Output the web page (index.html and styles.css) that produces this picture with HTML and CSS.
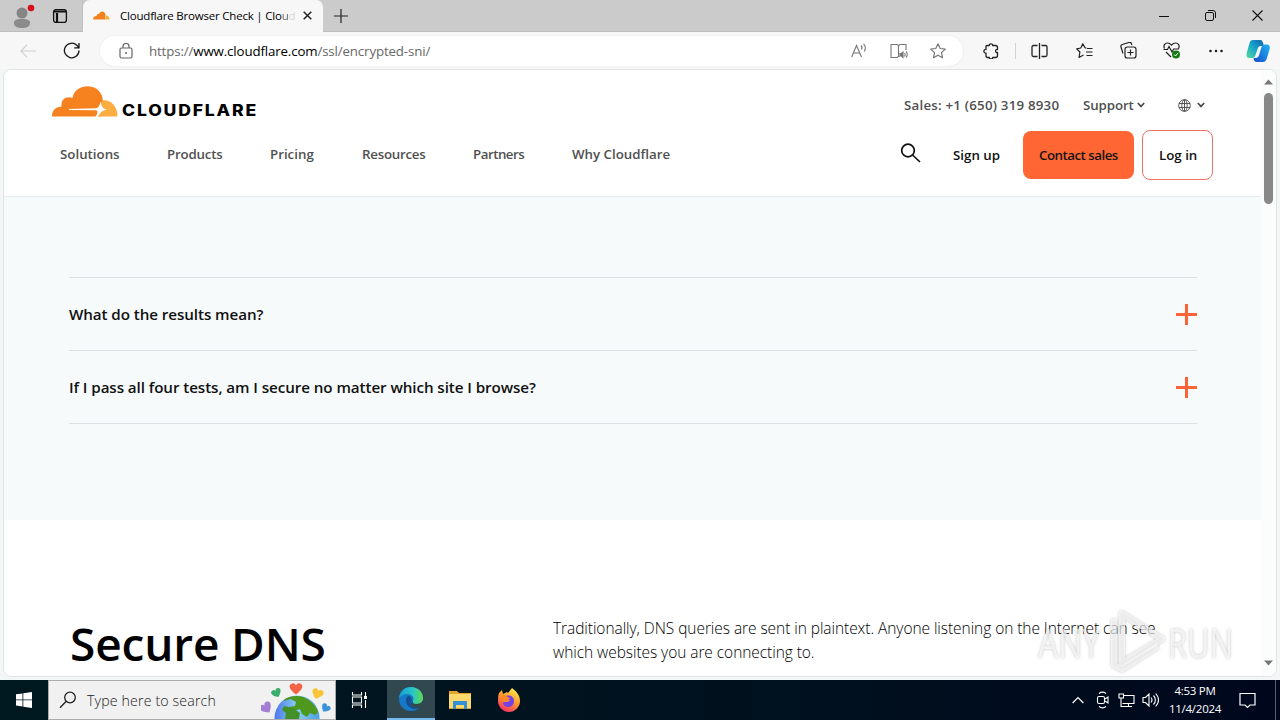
FILE: index.html
```html
<!DOCTYPE html>
<html lang="en">
<head>
<meta charset="utf-8">
<title>Cloudflare Browser Check</title>
<link rel="stylesheet" href="styles.css">
</head>
<body>
<div class="tabs">
  <div class="tabs-left">
    <svg class="profile" width="24" height="26" viewBox="0 0 24 26"><circle cx="11" cy="10" r="5.5" fill="#858585"/><path d="M3 20c0-3 2-4 8-4s8 1 8 4c0 4-4 5-8 5s-8-1-8-5z" fill="#8b8b8b"/><circle cx="20" cy="5" r="3.3" fill="#d51018"/></svg>
    <svg class="tabact" width="16" height="16" viewBox="0 0 16 16" fill="none" stroke="#111" stroke-width="1.3"><rect x="1.6" y="1.6" width="12.8" height="12.8" rx="2.5"/><path d="M2 3.5h12M5 5v9" stroke-width="2.2"/></svg>
  </div>
  <div class="tab">
    <svg width="17" height="9" viewBox="0 0 17 9"><path d="M0 8.5C0 6 1.500 5 3.500 5C4 3 5 2.700 6 3C7-.5 12-.5 12.500 3.500L12 8.500z" fill="#f48120"/><path d="M12 8.500L12.800 4.500C15 4.300 16.500 6 16.500 8.500z" fill="#faad3f"/></svg>
    <span class="tab-title">Cloudflare Browser Check | Clo<span class="half">u</span><span class="fade">d</span></span>
    <svg class="tab-close" width="9" height="9" viewBox="0 0 9 9" stroke="#222" stroke-width="1.5"><path d="M.7.7l7.600 7.600M8.300.7L.7 8.300"/></svg>
  </div>
  <svg class="newtab" width="14" height="14" viewBox="0 0 14 14" stroke="#222" stroke-width="1.2"><path d="M7 0v14M0 7h14"/></svg>
  <div class="win">
    <svg width="10" height="10" viewBox="0 0 10 10" stroke="#111"><path d="M0 5.500h10"/></svg>
    <svg width="11" height="11" viewBox="0 0 11 11" stroke="#111" fill="none"><rect x=".5" y="2.500" width="8" height="8" rx="1.500"/><path d="M3 .5h5a2.500 2.500 0 0 1 2.500 2.500v5"/></svg>
    <svg width="11" height="11" viewBox="0 0 11 11" stroke="#111" stroke-width="1.1"><path d="M.5.5l10 10M10.500.5l-10 10"/></svg>
  </div>
</div>
<div class="toolbar">
  <svg class="back" width="16" height="14" viewBox="0 0 16 14" fill="none" stroke="#cfcfcf" stroke-width="1.200"><path d="M7 .8L.9 7L7 13.200M1 7h15"/></svg>
  <svg class="reload" width="17" height="17" viewBox="0 0 17 17" fill="none" stroke="#161616" stroke-width="1.300"><path d="M16 8.500a7.300 7.300 0 1 1-2.200-5.200L16 5.600M16 1v4.800h-4.800"/></svg>
  <div class="address">
    <svg width="14" height="16" viewBox="0 0 14 16" fill="none" stroke="#666" stroke-width="1.200"><rect x="1" y="5" width="12" height="10" rx="1.500"/><path d="M4 5V3.500a3 3 0 0 1 6 0V5"/><circle cx="7" cy="10" r="1" fill="#666" stroke="none"/></svg>
    <span class="url">https://<b>www.cloudflare.com</b>/ssl/encrypted-sni/</span>
    <svg class="read" width="17" height="16" viewBox="0 0 17 16" fill="none" stroke="#777" stroke-width="1.100"><path d="M.7 14L5.500 2.500L10.500 14M2.500 10h6.200M10 2.500c1.200 1.200 1.200 2.800.4 4M12.500.8c2.500 2.500 2 5.500.7 7.700"/></svg>
    <svg class="book" width="18" height="16" viewBox="0 0 18 16" fill="none" stroke="#777" stroke-width="1.100"><path d="M8.500 2.500v11L7 14.500H1v-13h6l1.500 1L10 1.500h6V7M8.500 13.500h1.200"/><path d="M10 10.500h1.500L13 9v5.500l-1.500-1.500H10z" fill="#777"/><path d="M14.500 10c.7.800.7 2.500 0 3.500M16 8.500c1.600 1.500 1.600 4.500 0 6"/></svg>
    <svg class="star" width="16" height="16" viewBox="0 0 16 16" fill="none" stroke="#777" stroke-width="1.200" stroke-linejoin="round"><path d="M8 .8l2.200 4.700 5.100.6-3.800 3.500 1 5.100L8 12.200l-4.500 2.500 1-5.100L.7 6.100l5.100-.6z"/></svg>
  </div>
  <svg class="puzzle" width="16" height="16" viewBox="0 0 16 16" fill="none" stroke="#222" stroke-width="1.300" stroke-linejoin="round"><path d="M4 2.500H6.300C6 .2 10 .2 9.700 2.500H12.500Q14.500 2.500 14.500 4.500V6.500C12 6 12 10 14.500 9.500V12.500Q14.500 14.500 12.500 14.500H9.700C10 16.500 6 16.500 6.300 14.500H4.500Q3 14.500 3 12.800V10.200C.2 10.500.2 6 3 6.500V3.500Q3 2.500 4 2.500z"/></svg>
  <i class="bar"></i>
  <svg class="split" width="17" height="16" viewBox="0 0 17 16" fill="none" stroke="#222" stroke-width="1.300"><path d="M6.500 2.500h-4a1.500 1.500 0 0 0-1.500 1.500v8a1.500 1.500 0 0 0 1.500 1.500h4M10.500 2.500h4A1.500 1.500 0 0 1 16 4v8a1.500 1.500 0 0 1-1.500 1.500h-4M8.500 0v16"/></svg>
  <svg class="favs" width="17" height="16" viewBox="0 0 17 16" fill="none" stroke="#222" stroke-width="1.200" stroke-linejoin="round"><path d="M10.500 5L9 4.800L6.800 .8L4.800 5L.7 5.800l3.200 3.200L3 14.500l4.500-2.500M11 5.500h5.500M10 9h6.500M10.500 12.500h6"/></svg>
  <svg class="coll" width="17" height="17" viewBox="0 0 17 17" fill="none" stroke="#222" stroke-width="1.200"><rect x="5" y="5" width="11" height="11" rx="2.300"/><path d="M10.500 7.500v6M7.500 10.500h6M3 11.500L1 5a2 2 0 0 1 1.300-2.500l6.700-2a2 2 0 0 1 2.500 1.300l.3 1.200"/></svg>
  <svg class="heart" width="18" height="17" viewBox="0 0 18 17" fill="none" stroke="#222" stroke-width="1.200"><path d="M1.500 6.500C0 3.500 2 1 4.500 1C6.500 1 7.500 2 8.500 3.200C9.500 2 11 1 12.800 1C15.500 1 17 4 15.500 6.500M.5 7.500h4l1.500-3 3 5.500 1.700-3H16M3 10l5 5"/><circle cx="13" cy="12.500" r="4" fill="#137a13" stroke="none"/><path d="M11 12.500l1.500 1.500 2.500-3" stroke="#fff" stroke-width="1"/></svg>
  <svg class="dots" width="14" height="4" viewBox="0 0 14 4" fill="#222"><circle cx="1.500" cy="2" r="1.300"/><circle cx="7" cy="2" r="1.300"/><circle cx="12.500" cy="2" r="1.300"/></svg>
  <svg class="copilot" width="24" height="24" viewBox="0 0 24 24"><defs><linearGradient id="ca" x1="1" y1="0" x2="0" y2="1"><stop offset="0" stop-color="#1261ad"/><stop offset=".5" stop-color="#17a4c9"/><stop offset="1" stop-color="#54dd9a"/></linearGradient><linearGradient id="cb" x1="0" y1="1" x2="1" y2="0"><stop offset="0" stop-color="#164dc9"/><stop offset="1" stop-color="#20b4f4"/></linearGradient></defs><path d="M7 1h7c2 0 2.500 1 3 3l1 3h-3c-2 0-3 1-3.500 3l-2 6C9 18 8 19 6 19H3c-2 0-3-2-2.300-5L3.500 4C4.200 2 5 1 7 1z" fill="url(#ca)"/><path d="M17 23h-6c-2 0-3-1-3.500-4h2c2 0 3-1 3.600-3l2.400-8c.5-1.500 1.500-2.500 3.500-2.500h2c2.500 0 3.300 2 2.500 5l-2.700 9c-.7 2.300-1.800 3.500-3.800 3.500z" fill="url(#cb)"/></svg>
</div>
<div class="page">
  <div class="content">
    <header>
      <div class="top">
        <svg class="logo" width="208" height="32" viewBox="0 0 208 32"><path d="M0 30.500C0 24 4 20.500 9.500 20.800C8.500 13.500 14 9.300 20.500 12C23-3 47-4 50.500 12C51.500 17 50 24 48 30.500z" fill="#f6821f"/><path d="M45 30.500L50.500 14.300C59 13.500 65.500 20 65.500 30.500z" fill="#fbad41"/><path d="M17 23L44 22.300C46.500 22 47 20 49 15.500C49.500 20 50 22.500 55 23.500C50 24.500 48.500 26 46 31H43.500C46 27 46 25 44 24.300L17 23.900z" fill="#fff"/><text x="70" y="30" textLength="136" lengthAdjust="spacingAndGlyphs" class="wordmark">CLOUDFLARE</text></svg>
        <span class="sales">Sales: +1 (650) 319 8930</span>
        <span class="support">Support</span>
        <svg class="chev" width="8" height="6" viewBox="0 0 8 6"><path d="M.8 1L4 4.400L7.200 1" fill="none" stroke="#4b4b4b" stroke-width="1.700"/></svg>
        <svg class="globe" width="13" height="13" viewBox="0 0 13 13" fill="none" stroke="#555"><circle cx="6.500" cy="6.500" r="5.800"/><ellipse cx="6.500" cy="6.500" rx="2.700" ry="5.800"/><path d="M1 4.500h11M1 8.500h11M6.500 1v11"/></svg>
        <svg class="chev2" width="8" height="6" viewBox="0 0 8 6"><path d="M.8 1L4 4.400L7.200 1" fill="none" stroke="#4b4b4b" stroke-width="1.700"/></svg>
      </div>
      <div class="nav">
        <span class="n1">Solutions</span><span class="n2">Products</span><span class="n3">Pricing</span><span class="n4">Resources</span><span class="n5">Partners</span><span class="n6">Why Cloudflare</span>
        <svg class="search" width="22" height="20" viewBox="0 0 22 20" fill="none" stroke="#111" stroke-width="1.700"><circle cx="8" cy="7.500" r="6.300"/><path d="M12.500 12l7.500 7"/></svg>
        <span class="signup">Sign up</span>
        <span class="contact"><span>Contact sales</span></span>
        <span class="login"><span>Log in</span></span>
      </div>
    </header>
    <section class="faq">
      <div class="q"><span class="q1">What do the results mean?</span><svg width="21" height="21" viewBox="0 0 21 21" stroke="#fa6338" stroke-width="3"><path d="M10.500 0v21M0 10.500h21"/></svg></div>
      <div class="q"><span class="q2">If I pass all four tests, am I secure no matter which site I browse?</span><svg width="21" height="21" viewBox="0 0 21 21" stroke="#fa6338" stroke-width="3"><path d="M10.500 0v21M0 10.500h21"/></svg></div>
    </section>
    <section class="dns">
      <h1>Secure DNS</h1>
      <p><span class="l1">Traditionally, DNS queries are sent in plaintext. Anyone listening on the Internet can see</span><br><span class="l2">which websites you are connecting to.</span></p>
    </section>
  </div>
  <div class="scroll">
    <svg width="9" height="6" viewBox="0 0 9 6"><path d="M0 5.500h9L4.500.5z" fill="#777"/></svg>
    <i class="thumb"></i>
    <svg class="down" width="9" height="6" viewBox="0 0 9 6"><path d="M0 .5h9L4.500 5.500z" fill="#777"/></svg>
  </div>
</div>
<svg class="watermark" width="206" height="70" viewBox="0 0 206 70"><g class="wm"><text x="4" y="53" textLength="62" lengthAdjust="spacingAndGlyphs">ANY</text><text x="134" y="53" textLength="65" lengthAdjust="spacingAndGlyphs">RUN</text></g><g class="wm-logo"><path d="M88 9L128 34L88 58z"/><path d="M80 14V60L88 64L124 41"/></g></svg>
<div class="taskbar">
  <svg class="start" width="16" height="16" viewBox="0 0 16 16" fill="#fff"><path d="M0 2.300L6.500 1.400V7.500H0zM7.300 1.300L16 0V7.500H7.300zM0 8.300H6.500V14.500L0 13.600zM7.300 8.300H16V16L7.300 14.700z"/></svg>
  <div class="find">
    <svg width="18" height="18" viewBox="0 0 18 18" fill="none" stroke="#222" stroke-width="1.300"><circle cx="11" cy="6.500" r="5.300"/><path d="M7.200 10.300L1 16.800"/></svg>
    <span class="find-text">Type here to search</span>
    <svg class="earth" width="70" height="38" viewBox="0 0 70 38"><defs><linearGradient id="sea" x1="0" x2="1"><stop offset="0" stop-color="#4d78e8"/><stop offset=".5" stop-color="#86cef5"/><stop offset="1" stop-color="#4a9fe0"/></linearGradient><path id="hrt" d="M0 4C-7-1-7-5-3.500-6C-1.500-6.500-.5-5.500 0-4C.5-5.500 1.500-6.500 3.500-6C7-5 7-1 0 4z"/></defs><circle cx="36" cy="37" r="22.500" fill="url(#sea)"/><path d="M24 18c5-3 12-4 18-2 8 3 13 9 15 15l-3 3-5-2-3 4-5-3-2-5-6 2-5-4 6-1 1-4-5-3-8 2z" fill="#4e981e"/><path d="M23 25l9 2 7 5-1 6H24l1-6-4-3z" fill="#439029"/><use href="#hrt" transform="translate(35 9) scale(1.1)" fill="#f26448"/><use href="#hrt" transform="translate(16 13) rotate(-25) scale(.85)" fill="#39ad69"/><use href="#hrt" transform="translate(56 14) rotate(20)" fill="#fac43a"/><use href="#hrt" transform="translate(6 28) rotate(-35) scale(1.05)" fill="#a57dd3"/><use href="#hrt" transform="translate(64 28) rotate(35) scale(.8)" fill="#3994dc"/></svg>
  </div>
  <svg class="tview" width="18" height="18" viewBox="0 0 18 18" fill="none" stroke="#fff" stroke-width="1.100"><path d="M1.500 1v3h9V1M1.500 17v-3h9v3M1.500 6h9v6h-9zM14.500 1v4M14.500 9v8"/><path d="M13 5h3v3h-3z" fill="#fff" stroke="none"/></svg>
  <div class="edge"><svg width="26" height="26" viewBox="0 0 26 26"><defs><linearGradient id="ed" x1="0" x2="1"><stop offset="0" stop-color="#169bd4"/><stop offset=".55" stop-color="#27c4c9"/><stop offset="1" stop-color="#62da52"/></linearGradient></defs><circle cx="13" cy="13" r="12" fill="#1479c8"/><path d="M1 12C2 4 8 1 13 1c7 0 12 5 12 11 0 4-3 6-7 6-3 0-4-1-3-3 2-4-2-7-5-7-4 0-7 2-9 4z" fill="url(#ed)"/><path d="M9.500 10C6 15 9 22 16 23c3 .3 5-1 7-3-4 2-9 1-10-2-1-2 1-3 1-5-1-2-2-3-4.500-3z" fill="#164e91"/><path d="M15 15c-1 2 0 3 3 3 3 0 6-1 7-4l1 6-3 1c-5 2-10 0-10-3 0-2 1-2 2-3z" fill="#33474f"/></svg></div>
  <svg class="folder" width="22" height="20" viewBox="0 0 22 20"><path d="M0 1h8l2 2h12v16H0z" fill="#e4a52e"/><path d="M0 4h22v14H0z" fill="#ffd86b"/><path d="M4 19v-8h14v8h-3v-4H7v4z" fill="#3292d5"/></svg>
  <svg class="fox" width="24" height="24" viewBox="0 0 24 24"><defs><linearGradient id="fx" x1=".8" y1="0" x2=".3" y2="1"><stop offset="0" stop-color="#fff04a"/><stop offset=".5" stop-color="#ff982e"/><stop offset="1" stop-color="#f52f66"/></linearGradient></defs><path d="M2 5L5 2l1 4 4-2 1 1 4-5c4 3 8 7 8 13 0 6-5 11-11 11S1 19 1 13c0-3 0-5 1-8z" fill="url(#fx)"/><path d="M8 8c3-1 9-1 9 5 0 4-3 6-6 6-4 0-6-4-4-6 2 2 5 1 6-1L8 11z" fill="#7542e5"/><path d="M5 7c4 0 5 2 8 3-1 2-4 2-5 4-2 1-4-3-3-7z" fill="#ff8b20"/></svg>
  <div class="tray">
    <svg class="t1" width="12" height="8" viewBox="0 0 12 8" fill="none" stroke="#fff" stroke-width="1.200"><path d="M.6 7L6 1.500L11.400 7"/></svg>
    <svg class="t2" width="13" height="18" viewBox="0 0 13 18" fill="none" stroke="#fff" stroke-width="1.100"><rect x="1.500" y="5.500" width="7" height="7" rx="1.500"/><path d="M9 8l3-2v6l-3-2M3 2.500c2-1.500 5-1.500 7 0M3 15.500c2 1.500 5 1.500 7 0"/></svg>
    <svg class="t3" width="17" height="15" viewBox="0 0 17 15" fill="none" stroke="#fff" stroke-width="1.100"><path d="M6 2.500h10v8H4.500M10.500 10.500v3M6 13.500h8"/><path d="M1 1h4.500v4H1zM3 5v8.500h3"/></svg>
    <svg class="t4" width="17" height="14" viewBox="0 0 17 14" fill="none" stroke="#fff" stroke-width="1.100"><path d="M1 4.500h2.500L7 1v12L3.500 9.500H1zM9 4.500c1.200 1.500 1.200 3.500 0 5M11.500 2.500c2.500 2.500 2.500 6.500 0 9M13.700.5c3.500 4 3.500 9 0 13"/></svg>
    <div class="clock"><span class="time">4:53 PM</span><span class="date">11/4/2024</span></div>
    <svg class="t5" width="17" height="17" viewBox="0 0 17 17" fill="none" stroke="#fff" stroke-width="1.200"><path d="M1 1.500h15v11.500h-5l-2.500 2.500L6 13H1z"/></svg>
    <i class="peek"></i>
  </div>
</div>
</body>
</html>
```
FILE: styles.css
```css
* { box-sizing: border-box; }
body { margin: 0; width: 1280px; height: 720px; overflow: hidden; display: flex; flex-direction: column; background: #f3f6f6; font-family: "Open Sans", "Noto Sans", sans-serif; position: relative; color: #000; }
svg { flex: none; display: block; }
span { white-space: nowrap; }

.tabs { height: 32px; flex: none; background: #cbcbcb; display: flex; align-items: center; border-bottom: 1px solid #bdbdbd; }
.tabs-left { width: 83px; height: 31px; display: flex; align-items: center; padding-left: 11px; flex: none; border-right: 1px solid #c0c0c0; border-radius: 0 0 5px 0; }
.profile { margin-top: 1px; }
.tabact { margin-left: 17px; margin-top: 1px; }
.tab { width: 240px; height: 32px; background: #f7f7f7; border-radius: 7px 7px 0 0; display: flex; align-items: center; padding-left: 10px; flex: none; }
.tab-title { margin-left: 10px; width: 175px; font-size: 11.5px; letter-spacing: -.2px; }
.half { opacity: .6; }
.fade { opacity: .15; }
.tab-close { margin-left: 8px; }
.newtab { margin-left: 11px; }
.win { margin-left: auto; display: flex; gap: 36px; padding-right: 17px; align-items: center; }

.toolbar { height: 37px; flex: none; background: #f7f7f7; display: flex; align-items: center; padding-left: 20px; }
.reload { margin-left: 27px; }
.address { margin-left: 20px; width: 863px; height: 30px; background: #fff; border-radius: 15px; box-shadow: 0 0 1px 1px #f1f1f1; display: flex; align-items: center; padding-left: 19px; flex: none; }
.url { margin-left: 16px; width: 281px; font-size: 13.3px; letter-spacing: -.14px; color: #686868; }
.url b { font-weight: 400; color: #000; }
.read { margin-left: 421px; }
.book { margin-left: 22px; }
.star { margin-left: 22px; }
.puzzle { margin-left: 20px; }
.bar { width: 1px; height: 16px; background: #d2d2d2; margin-left: 16px; }
.split { margin-left: 15px; }
.favs { margin-left: 28px; }
.coll { margin-left: 27px; }
.heart { margin-left: 26px; }
.dots { margin-left: 28px; }
.copilot { margin-left: 23px; }

.page { margin: 0 3px 0 3px; height: 608px; flex: none; background: #fff; border: 1px solid #e2e4e4; border-radius: 8px; overflow: hidden; display: flex; }
.content { width: 1257px; flex: none; }
header { height: 127px; border-bottom: 1px solid #e6eded; color: #505050; }
.top { display: flex; align-items: center; height: 62px; padding-left: 48px; }
.logo { margin-top: 2px; }
.wordmark { font-family: Inter, sans-serif; font-weight: 800; font-size: 15.5px; letter-spacing: 1.600px; fill: #000; }
.sales { margin-left: 644px; width: 155px; font-size: 13.300px; font-weight: 600; letter-spacing: .22px; margin-top: 7px; }
.support { margin-left: 24px; width: 50px; font-size: 13.300px; font-weight: 600; letter-spacing: -.1px; margin-top: 7px; }
.chev { margin: 7px 0 0 4px; }
.globe { margin: 8px 0 0 33px; }
.chev2 { margin: 7px 0 0 6px; }
.nav { display: flex; height: 50px; margin-top: -2px; padding-left: 56px; align-items: center; font-size: 13.300px; font-weight: 600; }
.n1, .n2, .n3, .n4, .n5, .n6 { margin-top: -2px; }
.n1 { width: 107px; } .n2 { width: 103px; letter-spacing: -.2px; } .n3 { width: 92px; } .n4 { width: 111px; letter-spacing: -.25px; } .n5 { width: 99px; letter-spacing: -.5px; } .n6 { width: 328px; }
.search { margin-top: -5px; }
.signup { margin-left: 31px; width: 47px; color: #111; }
.contact { margin-left: 23px; width: 111px; height: 48px; background: #ff6633; border-radius: 8px; display: flex; align-items: center; padding-left: 16px; color: #151515; letter-spacing: -.5px; }
.login { margin-left: 8px; width: 71px; height: 50px; border: 1px solid #ef7265; border-radius: 8px; display: flex; align-items: center; padding-left: 16px; color: #111; }
.faq { height: 323px; padding: 80px 64px 0 65px; background: #f6fafb; }
.q { height: 73px; border-top: 1px solid #dae1e3; display: flex; align-items: center; justify-content: space-between; font-size: 15.200px; font-weight: 600; letter-spacing: -.08px; color: #111; }
.q:last-child { height: 74px; border-bottom: 1px solid #dae1e3; }
.dns { display: flex; padding: 90px 0 0 65px; }
h1 { margin: 0; width: 484px; flex: none; padding-left: 1px; font-size: 46px; line-height: 66px; font-weight: 600; letter-spacing: -.15px; white-space: nowrap; }
p { margin: 6px 0 0; font-size: 15.500px; line-height: 24px; letter-spacing: -.06px; font-weight: 300; }

.scroll { flex: 1; display: flex; flex-direction: column; align-items: center; padding-top: 9px; background: #fbfcfc; }
.thumb { width: 9px; height: 111px; margin-top: 8px; border-radius: 5px; background: #888; }
.down { margin-top: 456px; }

.watermark { position: absolute; left: 1034px; top: 605px; filter: drop-shadow(0 0 1.500px rgba(0,0,0,.35)); }
.wm { font: 500 41px "Open Sans", sans-serif; fill: rgba(255,255,255,.65); }
.wm-logo { fill: none; stroke: rgba(255,255,255,.65); stroke-width: 6px; stroke-linejoin: round; }

.taskbar { margin-top: auto; height: 40px; flex: none; background: linear-gradient(90deg, #001820, #00101e 65%, #00071d); display: flex; align-items: center; padding-left: 16px; }
.find { margin-left: 16px; width: 288px; height: 40px; background: #f1f1f1; border: 1px solid #ababab; display: flex; align-items: center; padding-left: 10px; flex: none; }
.find-text { margin-left: 10px; width: 129px; font-size: 14.200px; letter-spacing: .14px; color: #222; font-weight: 300; }
.earth { margin-left: 45px; }
.tview { margin-left: 15px; }
.edge { margin-left: 18px; width: 48px; height: 40px; background: #324850; border-bottom: 2px solid #76b9ed; display: flex; align-items: center; justify-content: center; }
.folder { margin-left: 14px; }
.fox { margin-left: 26px; }
.tray { margin-left: auto; display: flex; align-items: center; height: 40px; color: #fff; }
.t2 { margin-left: 12px; }
.t3 { margin-left: 9px; }
.t4 { margin-left: 7px; }
.clock { margin-left: 4px; width: 64px; display: flex; flex-direction: column; align-items: center; font-size: 11.500px; line-height: 18px; letter-spacing: -.25px; padding-bottom: 1px; }
.t5 { margin-left: 12px; }
.peek { width: 1px; height: 40px; background: #59606c; margin-left: 19px; margin-right: 4px; }
```
